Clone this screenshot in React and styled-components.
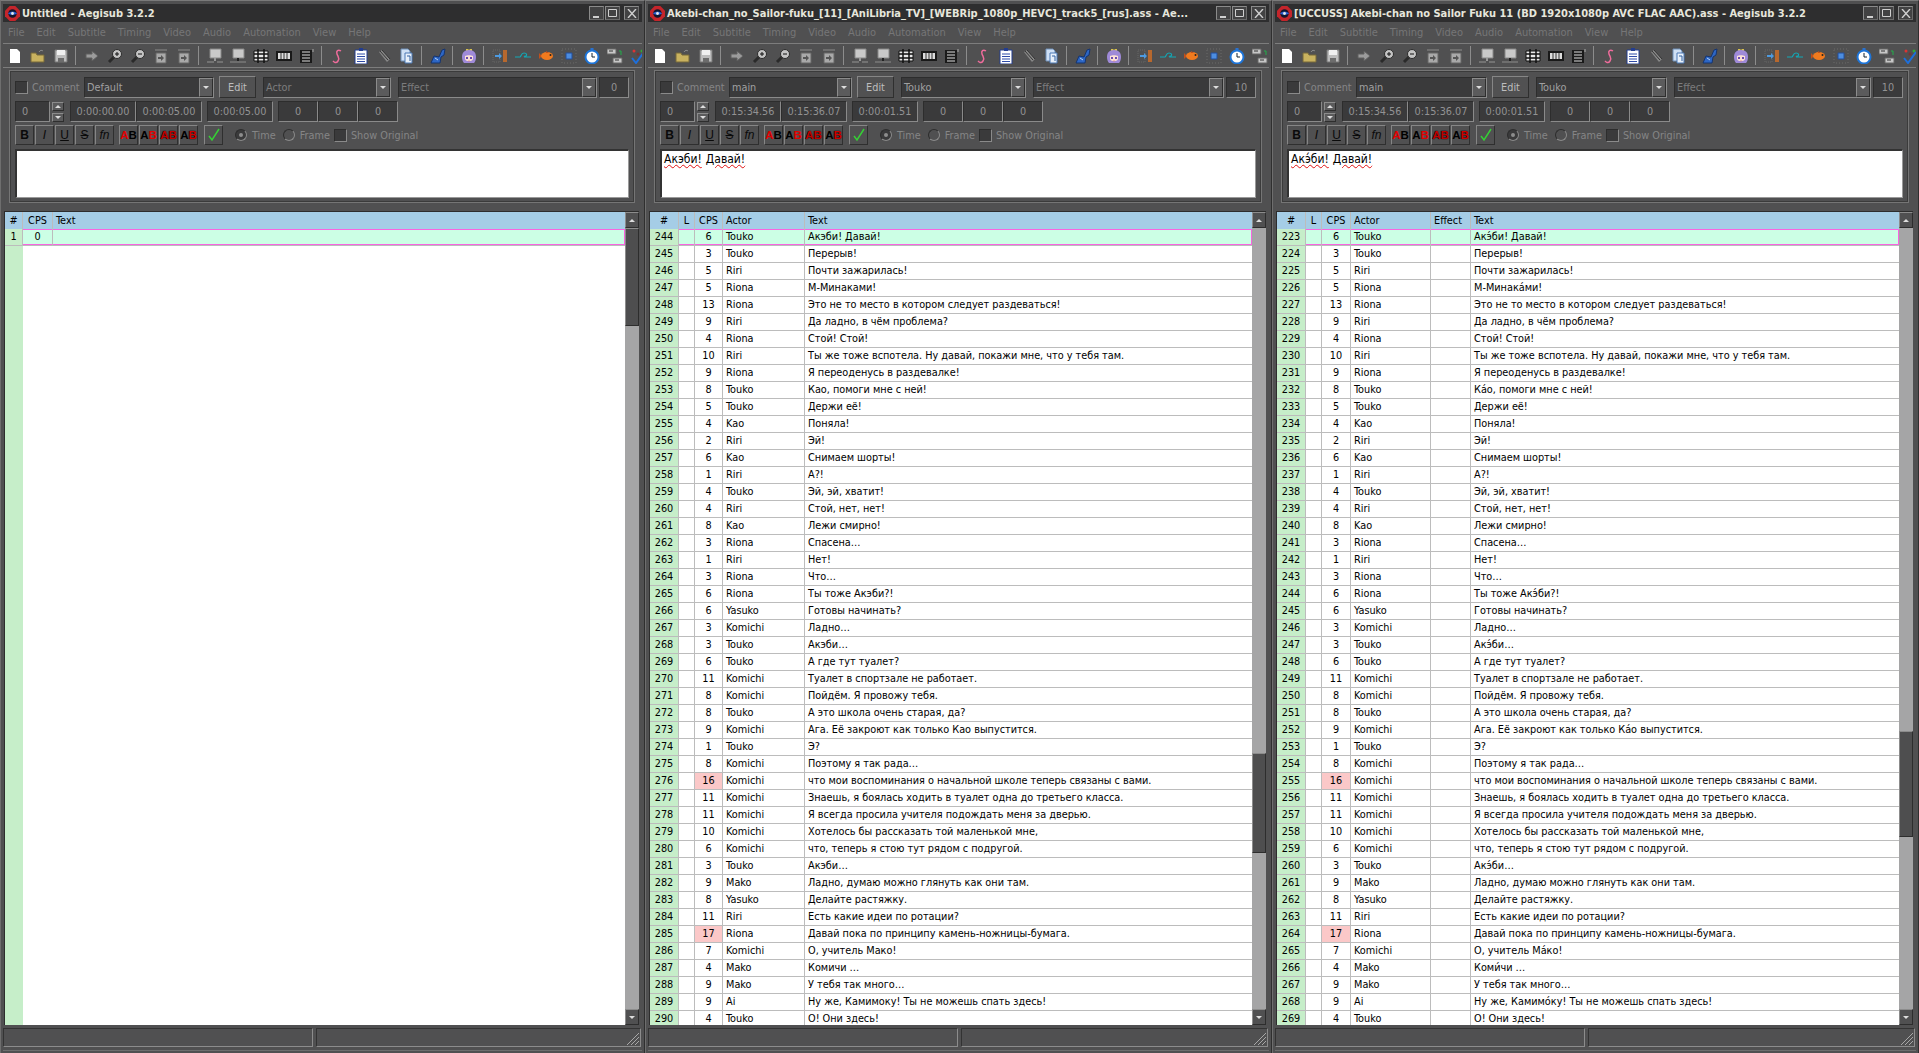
import React from 'react'
import styled, { createGlobalStyle } from 'styled-components'

const GlobalStyle = createGlobalStyle`
  html, body { margin: 0; padding: 0; background: #3d3d3e; }
  body { font-family: "DejaVu Sans Condensed", "Liberation Sans", sans-serif; font-size: 10.8px; }
`

// [cps, actor, text, text with accents (third window only)]
const LINES = [
  [6, 'Touko', 'Акэби! Давай!', 'Акэ́би! Давай!'],
  [3, 'Touko', 'Перерыв!'],
  [5, 'Riri', 'Почти зажарилась!'],
  [5, 'Riona', 'М-Минаками!', 'М-Минака́ми!'],
  [13, 'Riona', 'Это не то место в котором следует раздеваться!'],
  [9, 'Riri', 'Да ладно, в чём проблема?'],
  [4, 'Riona', 'Стой! Стой!'],
  [10, 'Riri', 'Ты же тоже вспотела. Ну давай, покажи мне, что у тебя там.'],
  [9, 'Riona', 'Я переоденусь в раздевалке!'],
  [8, 'Touko', 'Као, помоги мне с ней!', 'Ка́о, помоги мне с ней!'],
  [5, 'Touko', 'Держи её!'],
  [4, 'Kao', 'Поняла!'],
  [2, 'Riri', 'Эй!'],
  [6, 'Kao', 'Снимаем шорты!'],
  [1, 'Riri', 'А?!'],
  [4, 'Touko', 'Эй, эй, хватит!'],
  [4, 'Riri', 'Стой, нет, нет!'],
  [8, 'Kao', 'Лежи смирно!'],
  [3, 'Riona', 'Спасена…'],
  [1, 'Riri', 'Нет!'],
  [3, 'Riona', 'Что…'],
  [6, 'Riona', 'Ты тоже Акэби?!', 'Ты тоже Акэ́би?!'],
  [6, 'Yasuko', 'Готовы начинать?'],
  [3, 'Komichi', 'Ладно…'],
  [3, 'Touko', 'Акэби…', 'Акэ́би…'],
  [6, 'Touko', 'А где тут туалет?'],
  [11, 'Komichi', 'Туалет в спортзале не работает.'],
  [8, 'Komichi', 'Пойдём. Я провожу тебя.'],
  [8, 'Touko', 'А это школа очень старая, да?'],
  [9, 'Komichi', 'Ага. Её закроют как только Као выпустится.', 'Ага. Её закроют как только Ка́о выпустится.'],
  [1, 'Touko', 'Э?'],
  [8, 'Komichi', 'Поэтому я так рада…'],
  [16, 'Komichi', 'что мои воспоминания о начальной школе теперь связаны с вами.'],
  [11, 'Komichi', 'Знаешь, я боялась ходить в туалет одна до третьего класса.'],
  [11, 'Komichi', 'Я всегда просила учителя подождать меня за дверью.'],
  [10, 'Komichi', 'Хотелось бы рассказать той маленькой мне,'],
  [6, 'Komichi', 'что, теперь я стою тут рядом с подругой.'],
  [3, 'Touko', 'Акэби…', 'Акэ́би…'],
  [9, 'Mako', 'Ладно, думаю можно глянуть как они там.'],
  [8, 'Yasuko', 'Делайте растяжку.'],
  [11, 'Riri', 'Есть какие идеи по ротации?'],
  [17, 'Riona', 'Давай пока по принципу камень-ножницы-бумага.'],
  [7, 'Komichi', 'О, учитель Мако!', 'О, учитель Ма́ко!'],
  [4, 'Mako', 'Комичи …', 'Коми́чи …'],
  [9, 'Mako', 'У тебя так много…'],
  [9, 'Ai', 'Ну же, Камимоку! Ты не можешь спать здесь!', 'Ну же, Камимо́ку! Ты не можешь спать здесь!'],
  [4, 'Touko', 'О! Они здесь!'],
]

const WINDOWS = [
  {
    title: 'Untitled - Aegisub 3.2.2', width: 645, style: 'Default', styleW: 130, actor: 'Actor', actorW: 128,
    margin: '0', start: '0:00:00.00', end: '0:00:05.00', dur: '0:00:05.00', editor: null,
    cols: ['num', 'cps', 'text'], template: '18px 30px 1fr', thumbTop: 0, thumbH: 98,
    header: { num: '#', cps: 'CPS', text: 'Text' }, first: 1, empty: true,
  },
  {
    title: 'Akebi-chan_no_Sailor-fuku_[11]_[AniLibria_TV]_[WEBRip_1080p_HEVC]_track5_[rus].ass - Ae...',
    width: 627, style: 'main', styleW: 123, actor: 'Touko', actorW: 125, margin: '10',
    start: '0:15:34.56', end: '0:15:36.07', dur: '0:00:01.51', editor: ['Акэби!', 'Давай!'],
    cols: ['num', 'l', 'cps', 'actor', 'text'], template: '29px 16px 28px 82px 1fr', thumbTop: 525, thumbH: 100,
    header: { num: '#', l: 'L', cps: 'CPS', actor: 'Actor', text: 'Text' }, first: 244,
  },
  {
    title: '[UCCUSS] Akebi-chan no Sailor Fuku 11 (BD 1920x1080p AVC FLAC AAC).ass - Aegisub 3.2.2',
    width: 647, style: 'main', styleW: 131, actor: 'Touko', actorW: 131, margin: '10',
    start: '0:15:34.56', end: '0:15:36.07', dur: '0:00:01.51', editor: ['Акэ́би!', 'Давай!'],
    cols: ['num', 'l', 'cps', 'actor', 'effect', 'text'], template: '29px 16px 29px 80px 40px 1fr', thumbTop: 503, thumbH: 106,
    header: { num: '#', l: 'L', cps: 'CPS', actor: 'Actor', effect: 'Effect', text: 'Text' }, first: 223, accents: true,
  },
]

const MENU = ['File', 'Edit', 'Subtitle', 'Timing', 'Video', 'Audio', 'Automation', 'View', 'Help']

const TOOLS = ['new', 'open', 'save', '|', 'arrow', 'zoomIn', 'zoomOut', 'jump', 'jump', '|', 'monitor', 'monitorB', 'table', 'film', 'notes', '|',
  'script', 'clip', 'pen', 'docs', '|', 'auto', '|', 'face', '|', 'door', 'wave', 'fish', 'square', 'clock', 'translate', 'spell']

const ICONS = {
  new: <path d="M3 1h7l3 3v11H3z" fill="#fff" />,
  open: <>
    <path d="M1 5h5l1 2h7v7H1z" fill="#c9b25f" stroke="#77693a" />
    <path d="M9 4c1-2 3-2 4-1" fill="none" stroke="#8b8b8b" />
  </>,
  save: <>
    <path d="M2 2h12v12H2z" fill="#bdbdbd" stroke="#777" />
    <path d="M4 2h8v5H4z" fill="#f0f0f0" />
    <path d="M5 10h6v4H5z" fill="#6c6c6c" />
  </>,
  arrow: <path d="M2 6h6V3l6 5-6 5v-3H2z" fill="#9b9b9b" stroke="#5e5e5e" />,
  zoomIn: <>
    <path d="M7 9l-5 5" stroke="#2a2a2a" strokeWidth="3" />
    <circle cx="10" cy="6" r="4.5" fill="#c4c4c4" stroke="#2c2c2c" />
    <path d="M8 6h4M10 4v4" stroke="#111" />
  </>,
  zoomOut: <>
    <path d="M7 9l-5 5" stroke="#2a2a2a" strokeWidth="3" />
    <circle cx="10" cy="6" r="4.5" fill="#c4c4c4" stroke="#2c2c2c" />
    <path d="M8 6h4" stroke="#111" />
  </>,
  jump: <>
    <path d="M2 1h12v2H2z" fill="#6e6e6e" />
    <path d="M3 5h10v10H3z" fill="#a9a9a9" stroke="#666" />
    <path d="M5 9h3V7l3 3-3 3v-2H5z" fill="#555" />
  </>,
  monitor: <>
    <path d="M3 1h11v9H3z" fill="#c9c9c9" stroke="#888" />
    <path d="M7 10h2v3H7z" fill="#999" />
    <path d="M0 14h7M10 14h6" stroke="#7d7d7d" strokeWidth="1.6" />
  </>,
  monitorB: <>
    <path d="M3 1h11v9H3z" fill="#c9c9c9" stroke="#888" />
    <path d="M7 10h2v3H7z" fill="#222" />
    <path d="M0 14h16" stroke="#777" strokeWidth="1.6" />
  </>,
  table: <>
    <path d="M1 3h14v10H1z" fill="#e9e9e9" stroke="#111" />
    <path d="M1 6h14M1 10h14M5 1v14M11 1v14" stroke="#111" strokeWidth="1.5" />
  </>,
  film: <>
    <path d="M0 3h16v10H0z" fill="#191919" />
    <path d="M2 5h12v6H2z" fill="#ddd" />
    <path d="M5 5v6M8 5v6M11 5v6" stroke="#333" />
  </>,
  notes: <>
    <path d="M1 2h12v13H1z" fill="#1a1a1a" />
    <path d="M3 4h8M3 7h8M3 10h8M3 13h8" stroke="#ddd" />
    <path d="M14 1v3" stroke="#aaa" />
  </>,
  script: <path d="M11 3C8 1 6 3 7 6s3 4 1 7-4 1-5 0" fill="none" stroke="#f06c9c" strokeWidth="1.5" />,
  clip: <>
    <path d="M2 2h12v14H2z" fill="#fff" stroke="#233d8f" />
    <path d="M6 0h4v3H6z" fill="#233d8f" />
    <path d="M4 6h8M4 8.5h8M4 11h8M4 13.5h8" stroke="#2d4aa8" />
  </>,
  pen: <>
    <path d="M3 4l3-2 8 9-3 3z" fill="#888" />
    <path d="M4 3l8 9M6 2l8 9" stroke="#333" />
  </>,
  docs: <>
    <path d="M2 1h7l2 2v10H2z" fill="#cfe0f5" stroke="#6f8fb8" />
    <path d="M6 5h7v10H6z" fill="#e8f0fa" stroke="#4a78b5" />
    <path d="M8 8h3v5" fill="none" stroke="#2f5f9f" />
  </>,
  auto: <>
    <path d="M1 15l3-7 5 1 3-7 3-1-1 6-3 2-1 6z" fill="#2d66c4" stroke="#15346f" />
    <path d="M5 10l3 2" stroke="#b9d2f4" />
  </>,
  face: <>
    <path d="M5 1h2l1 1 1-1h2v2H5z" fill="#d8c24e" />
    <path d="M8 2c5 0 7 3 7 7 0 3-1 5-2 6H3c-1-1-2-3-2-6 0-4 2-7 7-7z" fill="#9f8ad8" />
    <path d="M4 8c2-1 6-1 8 0v3c-1 3-7 3-8 0z" fill="#fbe0d6" />
    <path d="M5 9h2v2H5zM9 9h2v2H9z" fill="#6a4bb0" />
    <path d="M7.5 13h1" stroke="#d65a5a" />
  </>,
  door: <>
    <path d="M1 2h7v12H1z" fill="none" stroke="#666" strokeDasharray="1 1" />
    <path d="M11 2h4v12h-4z" fill="#b7682e" />
    <path d="M3 7h4V5l3 3-3 3V9H3z" fill="#4d9ae0" />
  </>,
  wave: <path d="M0 9h5c1 0 1-4 4-4s3 2 2 3-2 0-2 0M9 9h7" fill="none" stroke="#12a7b5" strokeWidth="1.2" />,
  fish: <>
    <path d="M1 5l3 3-3 3z" fill="#c0501c" />
    <ellipse cx="9" cy="8" rx="6" ry="4" fill="#f07a1e" />
    <path d="M8 3l3 2H8z" fill="#c0501c" />
    <circle cx="12.5" cy="7" r="1" fill="#222" />
  </>,
  square: <>
    <path d="M1 1h14v14H1z" fill="none" stroke="#6a6a6a" strokeDasharray="1 2" />
    <path d="M5 5h6v6H5z" fill="#4d8de0" stroke="#234f9c" />
  </>,
  clock: <>
    <path d="M6.5 0h3v2h-3z" fill="#2a72d0" />
    <circle cx="8" cy="9" r="6.5" fill="#fff" stroke="#1d74d8" strokeWidth="2" />
    <path d="M8 5v4h3" fill="none" stroke="#123" />
  </>,
  translate: <>
    <path d="M0 1h9v5H0z" fill="#c7c7c7" stroke="#666" />
    <path d="M6 10h9v5H6z" fill="#c7c7c7" stroke="#666" />
    <path d="M2 3h4M8 12h4" stroke="#333" />
    <path d="M12 3h2v4" fill="none" stroke="#21b04b" />
  </>,
  spell: <>
    <circle cx="4" cy="3" r="1.5" fill="#d33" />
    <circle cx="12" cy="3" r="1.5" fill="#3a3" />
    <circle cx="8" cy="6" r="1.5" fill="#733" />
    <path d="M2 10l4 5 8-11" fill="none" stroke="#1d6fdc" strokeWidth="2" />
  </>,
}

const Page = styled.div`
  display: flex;
  width: 1919px;
  height: 1053px;
  overflow: hidden;
  background: #3d3d3e;
`

const Frame = styled.div`
  flex: none;
  box-sizing: border-box;
  width: ${p => p.$w}px;
  height: 1053px;
  padding: 1px 2px 0 2px;
  display: flex;
  flex-direction: column;
  overflow: hidden;
  background: #505051;
  border-left: 1px solid #6e6e6e;
  border-right: 1px solid #2f2f2f;
  border-top: 1px solid #7a7a7a;
`

const TitleBar = styled.div`
  flex: none;
  height: 18px;
  margin-top: 2px;
  display: flex;
  align-items: center;
  padding: 0 3px 0 2px;
  background: #2e2e2f;
  color: #e6e6dc;
  font-weight: bold;
  font-size: 11px;
  white-space: nowrap;
`

const TitleText = styled.div`
  flex: 1;
  min-width: 0;
  overflow: hidden;
  padding-left: 2px;
`

const WinButton = styled.div`
  flex: none;
  box-sizing: border-box;
  width: 15px;
  height: 14px;
  margin-left: ${p => p.$ml || 1}px;
  display: flex;
  align-items: center;
  justify-content: center;
  border: 1px solid #8b8b8b;
  border-right-color: #6a6a6a;
  border-bottom-color: #6a6a6a;
  background: #424243;
`

const MenuBar = styled.div`
  flex: none;
  height: 21px;
  display: flex;
  align-items: center;
  gap: 12px;
  padding-left: 5px;
  color: #767677;
  font-size: 11px;
`

const ToolBar = styled.div`
  flex: none;
  height: 25px;
  display: flex;
  align-items: center;
  overflow: hidden;
  border-top: 1px solid #7d7d7d;
  border-bottom: 1px solid #7d7d7d;
  box-sizing: border-box;
`

const ToolSlot = styled.div`
  flex: none;
  width: 23px;
  height: 16px;
  display: flex;
  justify-content: center;
`

const ToolSep = styled.div`
  flex: none;
  width: 1px;
  height: 19px;
  margin: 0 4px 0 3px;
  background: #8c8c8c;
`

const EditPanel = styled.div`
  flex: none;
  box-sizing: border-box;
  height: 133px;
  margin: 2px 7px 0 6px;
  padding: 5px;
  display: flex;
  flex-direction: column;
  gap: 3px;
  border: 1px solid #757575;
  box-shadow: inset 0 0 0 1px #3b3b3b;
`

const ControlRow = styled.div`
  flex: none;
  height: ${p => p.$h}px;
  display: flex;
  align-items: center;
  color: #858586;
`

const CheckBox = styled.div`
  flex: none;
  box-sizing: border-box;
  width: 13px;
  height: 13px;
  margin-left: ${p => p.$ml || 0}px;
  background: #3a3a3b;
  border: 1px solid #8a8a8a;
  border-top-color: #2d2d2d;
  border-left-color: #2d2d2d;
`

const Label = styled.div`
  flex: none;
  width: ${p => (p.$w ? `${p.$w}px` : 'auto')};
  margin-left: ${p => p.$ml || 0}px;
  white-space: nowrap;
`

const Combo = styled.div`
  flex: ${p => (p.$w ? 'none' : 1)};
  box-sizing: border-box;
  width: ${p => (p.$w ? `${p.$w}px` : 'auto')};
  height: 21px;
  padding-left: 2px;
  display: flex;
  align-items: center;
  justify-content: space-between;
  background: #3a3a3b;
  border: 1px solid #8a8a8a;
  border-top-color: #2d2d2d;
  border-left-color: #2d2d2d;
  color: ${p => (p.$dim ? '#7c7c7d' : '#a0a0a1')};
`

const ComboArrow = styled.div`
  flex: none;
  box-sizing: border-box;
  width: 14px;
  height: 100%;
  display: flex;
  align-items: center;
  justify-content: center;
  background: #5b5b5c;
  border: 1px solid #2e2e2e;
  border-top-color: #8c8c8c;
  border-left-color: #8c8c8c;
`

const Caret = styled.div`
  width: 0;
  height: 0;
  border-left: 3px solid transparent;
  border-right: 3px solid transparent;
  border-${p => (p.$up ? 'bottom' : 'top')}: 3px solid #ddd;
`

const PushButton = styled.div`
  flex: none;
  box-sizing: border-box;
  width: 37px;
  height: 22px;
  margin: 0 7px 0 5px;
  display: flex;
  align-items: center;
  justify-content: center;
  background: #515152;
  border: 1px solid #2f2f2f;
  border-top-color: #868686;
  border-left-color: #868686;
  color: #bdbdbe;
`

const Field = styled.div`
  flex: none;
  box-sizing: border-box;
  width: ${p => p.$w}px;
  height: 21px;
  margin-left: ${p => p.$ml || 0}px;
  display: flex;
  align-items: center;
  justify-content: ${p => (p.$left ? 'flex-start' : 'center')};
  padding-left: ${p => (p.$left ? 6 : 0)}px;
  background: #3a3a3b;
  border: 1px solid #8a8a8a;
  border-top-color: #2d2d2d;
  border-left-color: #2d2d2d;
  color: #929293;
`

const Spinner = styled.div`
  flex: none;
  display: flex;
  flex-direction: column;
  gap: 2px;
  margin: 0 6px 0 2px;
`

const SpinButton = styled.div`
  box-sizing: border-box;
  width: 12px;
  height: 9px;
  display: flex;
  align-items: center;
  justify-content: center;
  background: #5b5b5c;
  border: 1px solid #2e2e2e;
  border-top-color: #8c8c8c;
  border-left-color: #8c8c8c;
`

const StyleButton = styled.div`
  flex: none;
  box-sizing: border-box;
  width: ${p => p.$w || 19}px;
  height: 20px;
  margin-right: ${p => p.$mr || 1}px;
  display: flex;
  align-items: center;
  justify-content: center;
  background: #505051;
  border: 1px solid #2f2f2f;
  border-top-color: #868686;
  border-left-color: #868686;
  color: #0a0a0a;
  font-size: 12px;
  font-family: "Liberation Sans", sans-serif;
  font-weight: ${p => (p.$bold ? 'bold' : 'normal')};
  font-style: ${p => (p.$italic ? 'italic' : 'normal')};
  text-decoration: ${p => p.$deco || 'none'};
`

const AbA = styled.span`
  color: ${p => p.$c};
  font-size: 11.5px;
  font-weight: bold;
  text-shadow: ${p => (p.$shadow ? '0 0 1px #000, 0 0 1px #000' : 'none')};
`

const Radio = styled.div`
  flex: none;
  box-sizing: border-box;
  width: 12px;
  height: 12px;
  margin-left: ${p => p.$ml || 0}px;
  border-radius: 50%;
  display: flex;
  align-items: center;
  justify-content: center;
  border: 1px solid #8a8a8a;
  border-top-color: #2d2d2d;
  border-left-color: #2d2d2d;
  background: ${p => (p.$on ? '#3a3a3b' : 'transparent')};
`

const RadioDot = styled.div`
  width: 4px;
  height: 4px;
  border-radius: 50%;
  background: #8d8d8d;
`

const Editor = styled.div`
  flex: none;
  box-sizing: border-box;
  height: 49px;
  margin-top: 1px;
  padding: 1px 2px;
  background: #fff;
  border: 1px solid #9a9a9a;
  border-top: 2px solid #333;
  border-left: 2px solid #333;
  color: #000;
  font-size: 12px;
  line-height: 15px;
`

const Misspelled = styled.span`
  text-decoration: underline wavy #e01010 1px;
  margin-right: 4px;
`

const GridArea = styled.div`
  flex: 1;
  min-height: 0;
  margin: 8px 3px 0 1px;
  display: flex;
  border-top: 1px solid #2d2d2d;
  border-left: 1px solid #2d2d2d;
  background: #3a3a3b;
`

const GridBody = styled.div`
  flex: 1;
  min-width: 0;
  display: flex;
  flex-direction: column;
  overflow: hidden;
  background: #fff;
`

const Row = styled.div`
  flex: none;
  box-sizing: border-box;
  height: 17px;
  display: grid;
  grid-template-columns: ${p => p.$cols};
  background: ${p => (p.$head ? '#a5cde6' : p.$active ? '#ccffe5' : '#fff')};
  border-bottom: ${p => (p.$head ? 'none' : '1px solid #bcbcbc')};
  box-shadow: ${p => (p.$active ? 'inset 0 0 0 1px #f865e0' : 'none')};
  color: #000;
`

const Cell = styled.div`
  min-width: 0;
  padding: 0 ${p => (p.$center ? 0 : 3)}px;
  line-height: ${p => (p.$head ? 18 : 16)}px;
  white-space: nowrap;
  overflow: hidden;
  text-align: ${p => (p.$center ? 'center' : 'left')};
  background: ${p => p.$bg || 'transparent'};
  border-right: ${p => (p.$line ? '1px solid #bcbcbc' : 'none')};
`

const EmptyArea = styled.div`
  flex: 1;
  width: 18px;
  background: #c6eec9;
`

const ScrollBar = styled.div`
  flex: none;
  width: 14px;
  display: flex;
  flex-direction: column;
  background: #a5a5a6;
`

const ScrollTrack = styled.div`
  flex: 1;
  min-height: 0;
  overflow: hidden;
  padding-top: ${p => p.$top}px;
`

const ScrollThumb = styled.div`
  box-sizing: border-box;
  height: ${p => p.$h}px;
  background: #4e4e4f;
  border: 1px solid #2d2d2d;
  border-top-color: #8c8c8c;
  border-left-color: #8c8c8c;
`

const ScrollButton = styled.div`
  flex: none;
  box-sizing: border-box;
  height: 16px;
  display: flex;
  align-items: center;
  justify-content: center;
  background: #505051;
  border: 1px solid #2d2d2d;
  border-top-color: #8c8c8c;
  border-left-color: #8c8c8c;
`

const StatusBar = styled.div`
  flex: none;
  height: 19px;
  margin-top: 3px;
  display: flex;
  gap: 3px;
  padding-right: 1px;
`

const StatusPane = styled.div`
  flex: ${p => (p.$w ? 'none' : 1)};
  box-sizing: border-box;
  width: ${p => (p.$w ? `${p.$w}px` : 'auto')};
  position: relative;
  border-top: 1px solid #333;
  border-left: 1px solid #333;
  border-right: 1px solid #8c8c8c;
  border-bottom: 1px solid #8c8c8c;
`

const Grip = styled.svg`
  position: absolute;
  right: 0;
  bottom: 0;
`

const BottomEdge = styled.div`
  flex: none;
  height: 2px;
  margin: 1px 0 2px;
  border-bottom: 1px solid #6e6e6e;
`

function Icon({ name }) {
  return <svg width="16" height="16" viewBox="0 0 16 16">{ICONS[name]}</svg>
}

function AppLogo() {
  return <svg width="15" height="15" viewBox="0 0 16 16">
    <path d="M5 0h6l5 5v6l-5 5H5l-5-5V5z" fill="#c4252b" />
    <circle cx="8" cy="8" r="4.5" fill="#12172e" />
    <path d="M3 8c3-3 7-3 10 0-3 2-7 2-10 0z" fill="#2b5fd0" />
    <circle cx="8" cy="8" r="1.5" fill="#e8e8e8" />
  </svg>
}

function WindowButtons() {
  return <>
    <WinButton>
      <svg width="9" height="9" viewBox="0 0 9 9"><path d="M1 7h6v2H1z" fill="#cfcfcf" /></svg>
    </WinButton>
    <WinButton>
      <svg width="11" height="10" viewBox="0 0 11 10"><path d="M1.5 1.5h8v7h-8z" fill="none" stroke="#cfcfcf" /></svg>
    </WinButton>
    <WinButton $ml={4}>
      <svg width="10" height="9" viewBox="0 0 10 9"><path d="M1 0l8 9M9 0L1 9" stroke="#cfcfcf" strokeWidth="1.4" /></svg>
    </WinButton>
  </>
}

function DropDown({ value, width, dim }) {
  return <Combo $w={width} $dim={dim}>
    {value}
    <ComboArrow><Caret /></ComboArrow>
  </Combo>
}

function EditBox({ win }) {
  return <EditPanel>
    <ControlRow $h={22}>
      <CheckBox />
      <Label $w={52} $ml={4}>Comment</Label>
      <DropDown value={win.style} width={win.styleW} />
      <PushButton>Edit</PushButton>
      <DropDown value={win.actor} width={win.actorW} dim={win.actor === 'Actor'} />
      <Label $w={7} />
      <DropDown value="Effect" dim />
      <Field $w={30} $ml={2}>{win.margin}</Field>
    </ControlRow>
    <ControlRow $h={21}>
      <Field $w={35} $left>0</Field>
      <Spinner>
        <SpinButton><Caret $up /></SpinButton>
        <SpinButton><Caret /></SpinButton>
      </Spinner>
      <Field $w={66}>{win.start}</Field>
      <Field $w={66}>{win.end}</Field>
      <Field $w={66} $ml={5}>{win.dur}</Field>
      <Field $w={40} $ml={5}>0</Field>
      <Field $w={40}>0</Field>
      <Field $w={40}>0</Field>
    </ControlRow>
    <ControlRow $h={20}>
      <StyleButton $bold>B</StyleButton>
      <StyleButton $italic>I</StyleButton>
      <StyleButton $deco="underline">U</StyleButton>
      <StyleButton $deco="line-through">S</StyleButton>
      <StyleButton $italic $mr={5}>fn</StyleButton>
      <StyleButton><AbA $c="#e00000">A</AbA><AbA $c="#000">B</AbA></StyleButton>
      <StyleButton><AbA $c="#000">A</AbA><AbA $c="#e00000">B</AbA></StyleButton>
      <StyleButton><AbA $c="#c00000" $shadow>AB</AbA></StyleButton>
      <StyleButton $mr={6}><AbA $c="#000">A</AbA><AbA $c="#d00000" $shadow>B</AbA></StyleButton>
      <StyleButton>
        <svg width="14" height="14" viewBox="0 0 14 14"><path d="M2 8l3 4 7-11" fill="none" stroke="#35d035" strokeWidth="1.5" /></svg>
      </StyleButton>
      <Radio $ml={11} $on><RadioDot /></Radio>
      <Label $ml={5}>Time</Label>
      <Radio $ml={7} />
      <Label $ml={5}>Frame</Label>
      <CheckBox $ml={4} />
      <Label $ml={4}>Show Original</Label>
    </ControlRow>
    <Editor>
      {win.editor && win.editor.map(word => <Misspelled key={word}>{word}</Misspelled>)}
    </Editor>
  </EditPanel>
}

function LineRow({ win, line, index }) {
  const [cps, actor, text, accented] = line
  const values = {
    num: win.first + index,
    l: '',
    cps,
    actor,
    effect: '',
    text: win.accents && accented ? accented : text,
  }
  const warn = cps >= 16
  return <Row $cols={win.template} $active={index === 0}>
    {win.cols.map(col => <Cell
      key={col}
      $center={col === 'num' || col === 'cps' || col === 'l'}
      $line={col !== 'text'}
      $bg={col === 'num' ? '#c6eec9' : col === 'cps' && warn ? '#fbc8c8' : undefined}
    >{values[col]}</Cell>)}
  </Row>
}

function SubsGrid({ win }) {
  const rows = win.empty ? [[0, '', '']] : LINES
  return <GridArea>
    <GridBody>
      <Row $head $cols={win.template}>
        {win.cols.map(col => <Cell
          key={col}
          $head
          $center={col === 'num' || col === 'cps' || col === 'l'}
          $line={col !== 'text'}
        >{win.header[col]}</Cell>)}
      </Row>
      {rows.map((line, i) => <LineRow key={i} win={win} line={line} index={i} />)}
      {win.empty && <EmptyArea />}
    </GridBody>
    <ScrollBar>
      <ScrollButton><Caret $up /></ScrollButton>
      <ScrollTrack $top={win.thumbTop}><ScrollThumb $h={win.thumbH} /></ScrollTrack>
      <ScrollButton><Caret /></ScrollButton>
    </ScrollBar>
  </GridArea>
}

function AegisubWindow({ win }) {
  return <Frame $w={win.width}>
    <TitleBar>
      <AppLogo />
      <TitleText>{win.title}</TitleText>
      <WindowButtons />
    </TitleBar>
    <MenuBar>{MENU.map(item => <div key={item}>{item}</div>)}</MenuBar>
    <ToolBar>
      {TOOLS.map((tool, i) => (tool === '|'
        ? <ToolSep key={i} />
        : <ToolSlot key={i}><Icon name={tool} /></ToolSlot>))}
    </ToolBar>
    <EditBox win={win} />
    <SubsGrid win={win} />
    <StatusBar>
      <StatusPane $w={310} />
      <StatusPane>
        <Grip width="14" height="14" viewBox="0 0 14 14">
          <path d="M13 1L1 13M13 5L5 13M13 9L9 13" stroke="#a8a8a8" />
        </Grip>
      </StatusPane>
    </StatusBar>
    <BottomEdge />
  </Frame>
}

export default function App() {
  return <Page>
    <GlobalStyle />
    {WINDOWS.map(win => <AegisubWindow key={win.title} win={win} />)}
  </Page>
}
